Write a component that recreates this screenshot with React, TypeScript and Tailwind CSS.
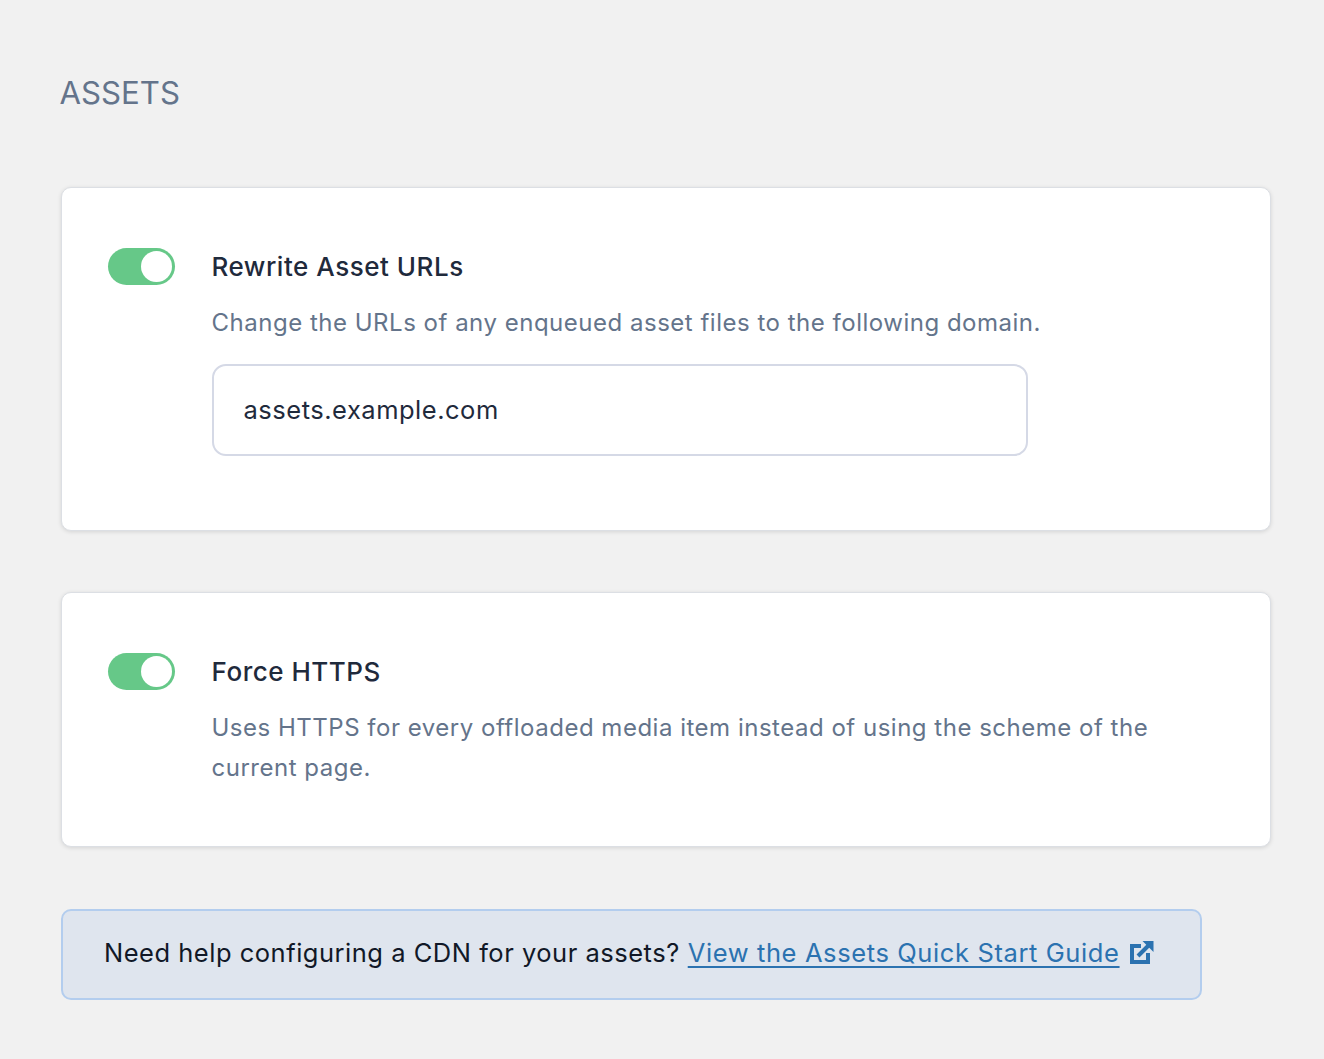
const FONT = "font-['Inter',sans-serif]"

function Toggle() {
  return (
    <div className="flex h-[37px] w-[67.5px] shrink-0 items-center justify-end rounded-full bg-[#66c888] pr-[3px]">
      <div className="h-[31px] w-[31px] rounded-full bg-white" />
    </div>
  )
}

function SettingCard({ title, children, className }: { title: string; children: React.ReactNode; className: string }) {
  return (
    <section
      className={`flex w-[1210px] gap-[36.5px] rounded-[10px] border border-[#dcdfe4] bg-white pl-[46px] pt-[60.5px] shadow-[0_1px_4px_rgba(0,0,0,0.12)] ${className}`}
    >
      <Toggle />
      <div className="min-w-0 flex-1">
        <h3 className="h-[37px] text-[26px] leading-[37px] font-medium tracking-[0.02em] text-[#1f2a3c]">{title}</h3>
        {children}
      </div>
    </section>
  )
}

export default function App() {
  return (
    <div className={`${FONT} min-h-[1059px] bg-[#f1f1f1] pl-[60.5px] pt-[73px]`}>
      <h2 className="-ml-px text-[31.2px] leading-[40px] font-normal text-[#64748b]">ASSETS</h2>

      <SettingCard title="Rewrite Asset URLs" className="mt-[73.5px] h-[344px]">
        <p className="mt-[18px] text-[24px] leading-[40px] tracking-[0.51px] text-[#64748b]">
          Change the URLs of any enqueued asset files to the following domain.
        </p>
        <div className="mt-[21px] flex h-[92px] w-[816px] items-center rounded-[14px] border-2 border-[#d5d9e6] bg-white pl-[30px] text-[25.5px] tracking-[0.02em] text-[#1f2a3c]">
          assets.example.com
        </div>
      </SettingCard>

      <SettingCard title="Force HTTPS" className="mt-[61px] h-[255.5px]">
        <p className="mt-[18px] w-[960px] text-[24px] leading-[40px] tracking-[0.51px] text-[#64748b]">
          Uses HTTPS for every offloaded media item instead of using the scheme of the current page.
        </p>
      </SettingCard>

      <div className="mt-[61.5px] flex h-[91px] w-[1141px] items-center rounded-[10px] border-2 border-[#b3cdee] bg-[#dfe5ee] pb-[2px] pl-[41.5px] text-[25.5px] tracking-[0.51px] text-[#111827]">
        <span>Need help configuring a CDN for your assets?</span>
        <a href="#" className="ml-[8px] tracking-[0.61px] text-[#2b72b0] underline decoration-2 underline-offset-[4px]">
          View the Assets Quick Start Guide
        </a>
        <svg className="ml-[10px] -translate-y-px" width="24" height="24" viewBox="0 0 24 24" fill="none" stroke="#2b72b0" aria-hidden="true">
          <path d="M11 6H2V22H18V13" strokeWidth="4" />
          <path d="M8 16 L19 5" strokeWidth="4" />
          <path d="M12.5 1H23.5V12Z" fill="#2b72b0" stroke="none" />
        </svg>
      </div>
    </div>
  )
}
